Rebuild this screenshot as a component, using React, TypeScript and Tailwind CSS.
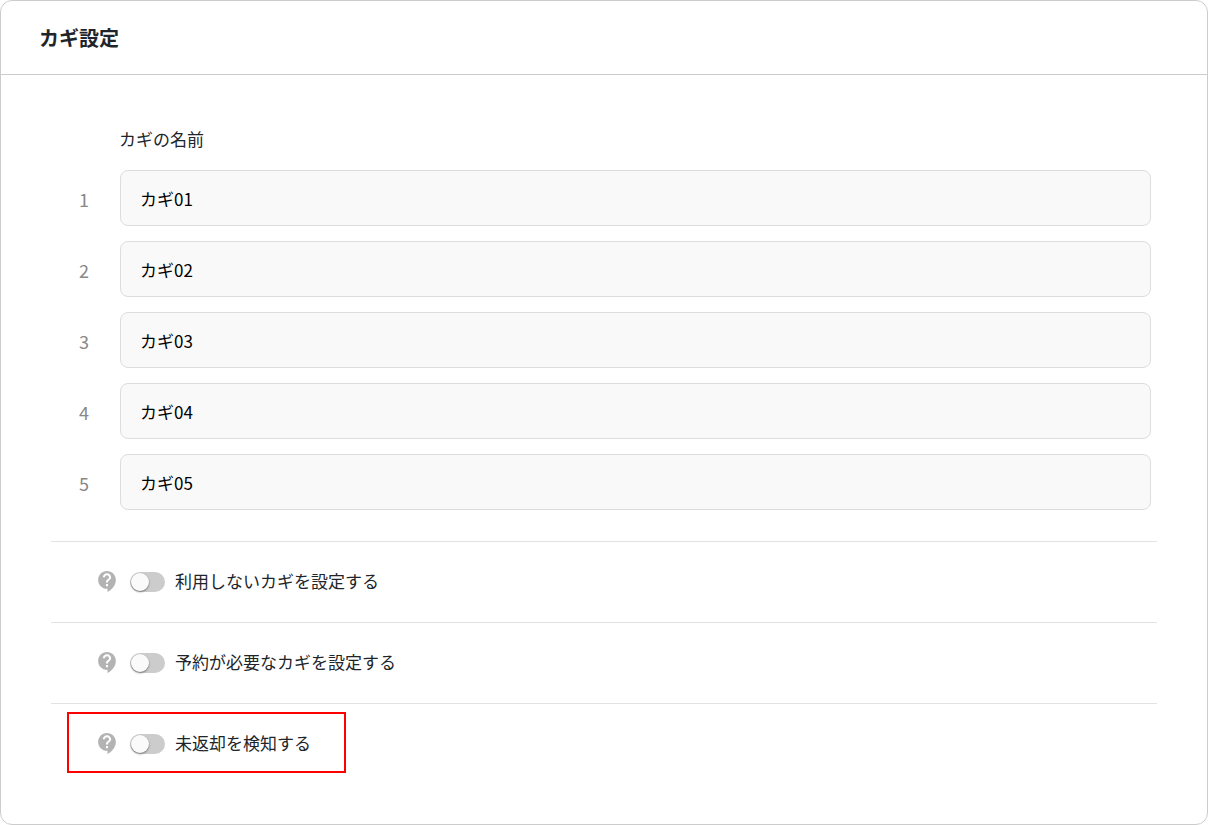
import { useState } from "react";
import { MdContactSupport } from "react-icons/md";
import clsx from "clsx";

const options = [
  { id: "unused", label: "利用しないカギを設定する", highlighted: false },
  { id: "reserve", label: "予約が必要なカギを設定する", highlighted: false },
  { id: "unreturned", label: "未返却を検知する", highlighted: true },
];

const KeyRow = ({ index, value, onChange }: any) => {
  return (
    <li className="flex items-center">
      <label
        htmlFor={`key-${index}`}
        className="w-[41px] shrink-0 pt-0.5 text-[18px] leading-6 text-[#888888]"
      >
        {index}
      </label>
      <input
        id={`key-${index}`}
        type="text"
        value={value}
        onChange={(e) => onChange(e.target.value)}
        className="h-14 min-w-0 flex-1 rounded-lg border border-[#dddddd] bg-[#f9f9f9] px-[19px] text-[17px] text-black outline-none focus:border-[#999999]"
      />
    </li>
  );
};

const OptionRow = ({ id, label, highlighted }: any) => {
  return (
    <div className="border-t border-[#e2e2e2] pt-2 pb-[11px] pl-4">
      <div
        className={clsx(
          "inline-flex h-[61px] items-center gap-2.5 border-2 pt-0.5 pr-[33px] pl-[26px] align-top",
          highlighted ? "border-[#ff0000]" : "border-transparent"
        )}
      >
        <button type="button" aria-label={`${label}のヘルプ`} className="cursor-pointer">
          <MdContactSupport className="size-[25px] text-[#b3b3b3]" />
        </button>
        <input
          id={id}
          type="checkbox"
          role="switch"
          className="flex h-5 w-[35px] cursor-pointer appearance-none items-center rounded-full bg-[#cccccc] px-px before:size-[18px] before:rounded-full before:bg-[#fafafa] before:shadow-[0_1px_2px_rgba(0,0,0,0.45)] before:content-[''] checked:bg-[#5b9bd5] checked:before:translate-x-[15px]"
        />
        <label htmlFor={id} className="cursor-pointer pb-0.5 text-[17px] leading-6">
          {label}
        </label>
      </div>
    </div>
  );
};

const App = () => {
  const [names, setNames] = useState(["カギ01", "カギ02", "カギ03", "カギ04", "カギ05"]);

  const rename = (i: number, value: string) => {
    setNames(names.map((name, n) => (n === i ? value : name)));
  };

  return (
    <main className="rounded-xl border border-[#cccccc] bg-white pb-10 font-['Noto_Sans_CJK_JP',sans-serif] text-[#212529]">
      <header className="border-b border-[#cccccc] px-[38px] py-[22px]">
        <h1 className="text-[20px] leading-[29px] font-bold">カギ設定</h1>
      </header>
      <div className="px-[50px] pt-[52px]">
        <section className="pr-1.5 pb-[31px] pl-7">
          <h2 className="mb-[19px] pl-10 text-[17px] leading-6">カギの名前</h2>
          <ul className="flex flex-col gap-[15px]">
            {names.map((name, i) => (
              <KeyRow
                key={i}
                index={i + 1}
                value={name}
                onChange={(value: string) => rename(i, value)}
              />
            ))}
          </ul>
        </section>
        {options.map((option) => (
          <OptionRow key={option.id} {...option} />
        ))}
      </div>
    </main>
  );
};
export default App;
